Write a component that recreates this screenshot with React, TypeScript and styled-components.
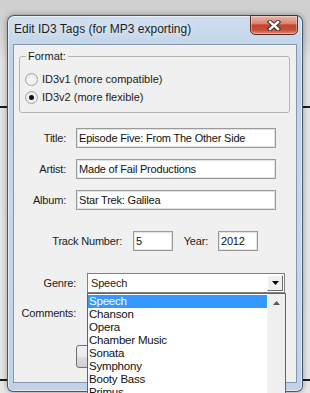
import { FC } from 'react'
import styled, { createGlobalStyle } from 'styled-components'

const GENRES = ['Speech', 'Chanson', 'Opera', 'Chamber Music', 'Sonata', 'Symphony', 'Booty Bass', 'Primus']

const GlobalStyle = createGlobalStyle`
  html, body {
    margin: 0;
    padding: 0;
  }

  body {
    width: 310px;
    height: 393px;
    overflow: hidden;
    font-family: "Liberation Sans", Arial, sans-serif;
    font-size: 11px;
    color: #1b1b1b;
    background:
      linear-gradient(#1c1c1c, #1c1c1c) 0 106px / 100% 2px no-repeat,
      linear-gradient(#1c1c1c, #1c1c1c) 0 379px / 100% 2px no-repeat,
      linear-gradient(#cfcfcf, #d6d6d6 40px, #e4e4e4 60px, #e8e8e8);
  }
`

const Page = styled.div`
  padding: 15px 0 0 7px;
`

const Window = styled.div`
  box-sizing: border-box;
  width: 296px;
  height: 377px;
  display: flex;
  flex-direction: column;
  border: 1px solid rgba(38, 56, 78, 0.8);
  border-radius: 7px 7px 6px 6px;
  background: linear-gradient(180deg, #cfdeef 0%, #bed1e6 12%, #c5d7eb 50%, #bfd2e7 100%);
  box-shadow: inset 0 0 0 1px rgba(255, 255, 255, 0.55), 0 0 6px rgba(0, 0, 0, 0.35);
`

const TitleBar = styled.div`
  height: 28px;
  display: flex;
  justify-content: space-between;
  align-items: flex-start;
  padding: 0 4px 0 6px;
`

const Caption = styled.div`
  padding-top: 5px;
  font-size: 12px;
  line-height: 16px;
  color: #1e1e1e;
  text-shadow: 0 0 7px rgba(255, 255, 255, 0.9);
`

const CloseButton = styled.div`
  box-sizing: border-box;
  width: 48px;
  height: 20px;
  margin-top: -1px;
  display: flex;
  align-items: center;
  justify-content: center;
  border: 1px solid #5e2a22;
  border-radius: 0 0 5px 5px;
  background: linear-gradient(180deg, #e8b6aa 0%, #d98672 42%, #c4452e 50%, #c7503a 78%, #dc8d73 100%);
  box-shadow: inset 0 0 0 1px rgba(255, 255, 255, 0.35);
`

const Client = styled.div`
  flex: 1;
  position: relative;
  margin: 0 5px 8px 5px;
  border: 1px solid #8397b0;
  background: #f0f0f0;
  display: flex;
  flex-direction: column;
`

const GroupBox = styled.fieldset`
  margin: 5px 6px 0 5px;
  padding: 0 5px 6px;
  min-width: 0;
  border: 1px solid #b4b4b4;
  border-radius: 3px;
`

const GroupLegend = styled.legend`
  margin-left: 1px;
  padding: 0 2px;
  line-height: 13px;
`

const RadioList = styled.div`
  margin-top: 7px;
  display: flex;
  flex-direction: column;
`

const RadioRow = styled.label`
  height: 18px;
  display: flex;
  align-items: center;
  gap: 4px;
`

const RadioDot = styled.span<{ $checked?: boolean }>`
  box-sizing: border-box;
  width: 13px;
  height: 13px;
  border-radius: 50%;
  border: 1px solid #a2a4a6;
  background: radial-gradient(circle at 50% 60%, #fbfbfb 0%, #ececec 60%, #dadada 100%);
  display: flex;
  align-items: center;
  justify-content: center;

  &::after {
    content: '';
    width: 5px;
    height: 5px;
    border-radius: 50%;
    background: ${({ $checked }) => ($checked ? '#111' : 'transparent')};
  }
`

const FieldRow = styled.div<{ $top: number; $left?: number }>`
  height: 20px;
  display: flex;
  align-items: center;
  margin-top: ${({ $top }) => $top}px;
  padding-left: ${({ $left }) => $left ?? 0}px;
`

const FieldLabel = styled.span<{ $width?: number; $gap: number }>`
  ${({ $width }) => ($width ? `width: ${$width}px;` : '')}
  flex-shrink: 0;
  text-align: right;
  margin-right: ${({ $gap }) => $gap}px;
  letter-spacing: -0.2px;
  line-height: 13px;
  padding-top: 1px;
`

const TextBox = styled.input<{ $width: number }>`
  box-sizing: border-box;
  width: ${({ $width }) => $width}px;
  height: 20px;
  margin: 0;
  padding: 0 0 0 2px;
  border: 1px solid #9a9a9a;
  box-shadow: inset 1px 1px 0 #e2e2e2, inset -1px -1px 0 #e2e2e2;
  background: #fff;
  font-family: "Liberation Sans", Arial, sans-serif;
  font-size: 11px;
  letter-spacing: -0.2px;
  color: #111;
  outline: none;
`

const ComboBox = styled.div`
  box-sizing: border-box;
  width: 198px;
  height: 20px;
  display: flex;
  align-items: center;
  padding-left: 3px;
  border: 1px solid #7f7f7f;
  background: #fff;
  letter-spacing: -0.2px;
`

const ComboArrow = styled.span`
  box-sizing: border-box;
  width: 16px;
  height: 16px;
  margin-left: auto;
  margin-right: 1px;
  display: flex;
  align-items: center;
  justify-content: center;
  border: 1px solid;
  border-color: #fff #6a6a6a #6a6a6a #fff;
  background: #f0f0f0;
`

const CommentsRow = styled.div`
  display: flex;
  align-items: flex-start;
  margin-top: 10px;
`

const CommentsArea = styled.div`
  box-sizing: border-box;
  width: 198px;
  height: 36px;
  border: 1px solid #9a9a9a;
  background: #fff;
`

const ButtonRow = styled.div`
  display: flex;
  gap: 8px;
  margin: 6px 0 0 62px;
`

const PushButton = styled.div`
  box-sizing: border-box;
  width: 75px;
  height: 23px;
  border: 1px solid #707070;
  border-radius: 3px;
  background: linear-gradient(#f2f2f2 0%, #ebebeb 50%, #dddddd 51%, #cfcfcf 100%);
`

const DropList = styled.div`
  position: absolute;
  left: 73px;
  top: 248px;
  box-sizing: border-box;
  width: 199px;
  height: 112px;
  display: flex;
  border: 1px solid #646464;
  background: #fff;
`

const DropItems = styled.div`
  flex: 1;
  padding-top: 1px;
`

const DropItem = styled.div<{ $selected?: boolean }>`
  height: 13px;
  line-height: 13px;
  padding-left: 1px;
  font-size: 11.5px;
  letter-spacing: -0.2px;
  color: ${({ $selected }) => ($selected ? '#fff' : '#111')};
  background: ${({ $selected }) => ($selected ? '#3399ff' : 'transparent')};
`

const ScrollTrack = styled.div`
  width: 17px;
  background: #efefef;
  border-left: 1px solid #f7f7f7;
  display: flex;
  flex-direction: column;
  align-items: center;
`

const ScrollUp = styled.div`
  height: 17px;
  display: flex;
  align-items: center;
  justify-content: center;
`

const Triangle: FC<{ up?: boolean; color: string }> = ({ up, color }) => (
  <svg width="7" height="4" viewBox="0 0 7 4">
    <polygon points={up ? '3.5,0 7,4 0,4' : '0,0 7,0 3.5,4'} fill={color} />
  </svg>
)

const CloseGlyph: FC = () => (
  <svg width="14" height="11" viewBox="0 0 14 11">
    <g strokeLinecap="square">
      <path d="M3 2 L11 9 M11 2 L3 9" stroke="#3b2b2b" strokeWidth="4.4" />
      <path d="M3 2 L11 9 M11 2 L3 9" stroke="#fff" strokeWidth="2.4" />
    </g>
  </svg>
)

const App: FC = () => (
  <>
    <GlobalStyle />
    <Page>
      <Window>
        <TitleBar>
          <Caption>Edit ID3 Tags (for MP3 exporting)</Caption>
          <CloseButton>
            <CloseGlyph />
          </CloseButton>
        </TitleBar>
        <Client>
          <GroupBox>
            <GroupLegend>Format:</GroupLegend>
            <RadioList>
              <RadioRow>
                <RadioDot />
                ID3v1 (more compatible)
              </RadioRow>
              <RadioRow>
                <RadioDot $checked />
                ID3v2 (more flexible)
              </RadioRow>
            </RadioList>
          </GroupBox>

          <FieldRow $top={15}>
            <FieldLabel $width={52} $gap={10}>Title:</FieldLabel>
            <TextBox $width={200} readOnly defaultValue="Episode Five: From The Other Side" />
          </FieldRow>
          <FieldRow $top={11}>
            <FieldLabel $width={52} $gap={10}>Artist:</FieldLabel>
            <TextBox $width={200} readOnly defaultValue="Made of Fail Productions" />
          </FieldRow>
          <FieldRow $top={11}>
            <FieldLabel $width={52} $gap={10}>Album:</FieldLabel>
            <TextBox $width={200} readOnly defaultValue="Star Trek: Galilea" />
          </FieldRow>

          <FieldRow $top={21}>
            <FieldLabel $width={108} $gap={11}>Track Number:</FieldLabel>
            <TextBox $width={40} readOnly defaultValue="5" />
            <FieldLabel $width={35} $gap={10}>Year:</FieldLabel>
            <TextBox $width={40} readOnly defaultValue="2012" />
          </FieldRow>

          <FieldRow $top={22}>
            <FieldLabel $width={62} $gap={11}>Genre:</FieldLabel>
            <ComboBox>
              Speech
              <ComboArrow>
                <Triangle color="#000" />
              </ComboArrow>
            </ComboBox>
          </FieldRow>

          <CommentsRow>
            <FieldLabel $width={62} $gap={11} style={{ paddingTop: 4 }}>
              Comments:
            </FieldLabel>
            <CommentsArea />
          </CommentsRow>

          <ButtonRow>
            <PushButton />
            <PushButton />
          </ButtonRow>

          <DropList>
            <DropItems>
              {GENRES.map((genre, index) => (
                <DropItem key={genre} $selected={index === 0}>
                  {genre}
                </DropItem>
              ))}
            </DropItems>
            <ScrollTrack>
              <ScrollUp>
                <Triangle up color="#5a5a5a" />
              </ScrollUp>
            </ScrollTrack>
          </DropList>
        </Client>
      </Window>
    </Page>
  </>
)

export default App
